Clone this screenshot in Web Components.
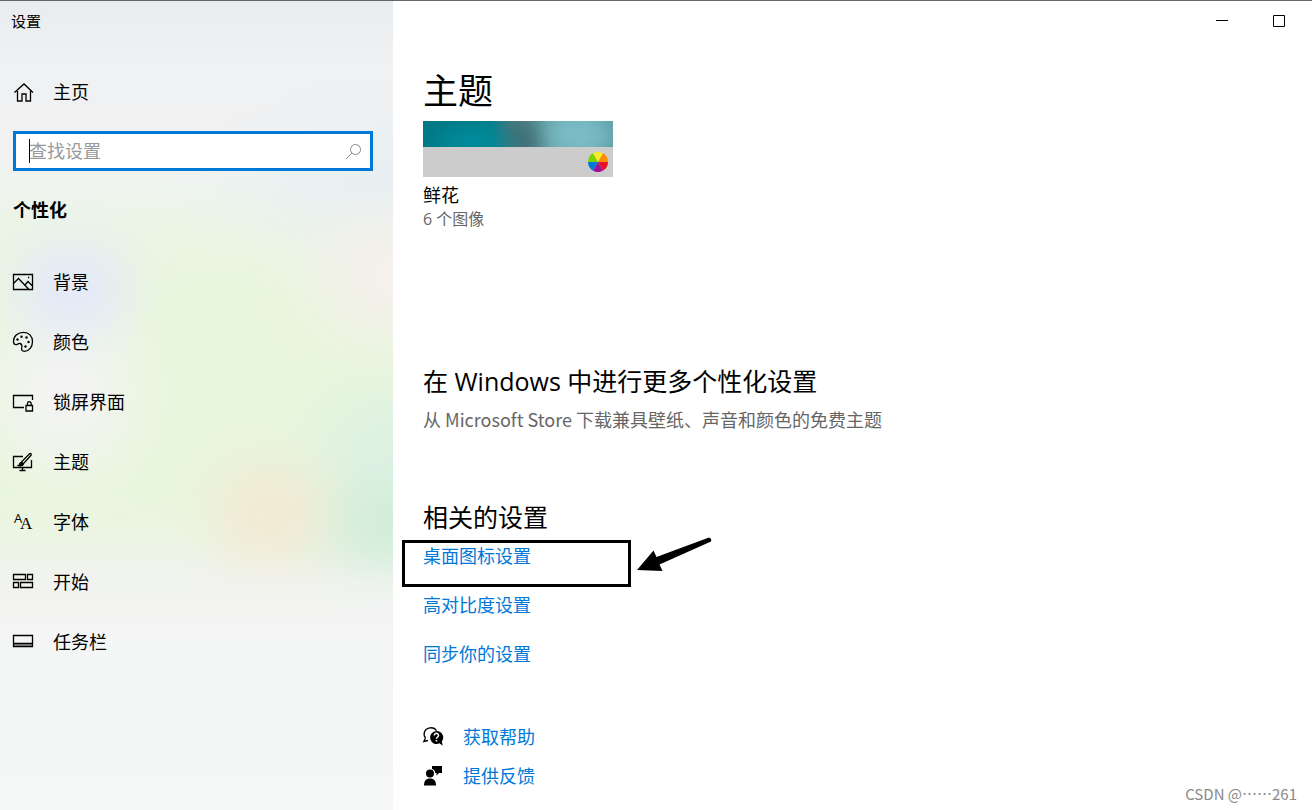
<!DOCTYPE html>
<html lang="zh-CN">
<head>
<meta charset="utf-8">
<meta name="viewport" content="width=device-width, initial-scale=1">
<title>设置</title>
<style>
  body {
    margin: 0;
    color: #000;
    background: #fff;
    font-family: "Open Sans", "Noto Sans CJK SC", sans-serif;
    font-size: 18px;
    line-height: 24px;
  }
</style>
</head>
<body>
<settings-window>
  <settings-sidebar slot="sidebar" heading="个性化">
    <nav-item slot="home" icon="home">主页</nav-item>
    <nav-item icon="picture">背景</nav-item>
    <nav-item icon="palette">颜色</nav-item>
    <nav-item icon="lock">锁屏界面</nav-item>
    <nav-item icon="theme">主题</nav-item>
    <nav-item icon="font">字体</nav-item>
    <nav-item icon="start">开始</nav-item>
    <nav-item icon="taskbar">任务栏</nav-item>
  </settings-sidebar>

  <theme-tile name="鲜花">6 个图像</theme-tile>
  <settings-section class="more" heading="在 Windows 中进行更多个性化设置">
    从 Microsoft Store 下载兼具壁纸、声音和颜色的免费主题
  </settings-section>
  <settings-section class="related" heading="相关的设置">
    <related-link marked>桌面图标设置</related-link>
    <related-link>高对比度设置</related-link>
    <related-link>同步你的设置</related-link>
  </settings-section>
  <support-link icon="help">获取帮助</support-link>
  <support-link icon="feedback">提供反馈</support-link>
  <span slot="watermark">CSDN @……261</span>
</settings-window>

<script>
const html = String.raw;

const icons = {
  home: html`<path d="M1.500 10.500 11 2l9 8.500M4.500 9v10H9v-7h4v7h4.500V9"/>`,
  picture: html`<path d="M.5 2.500h19v15H.5zM.5 11.500 5.500 6.500l10 10.500M12 13l3-3.500 5 5"/><path d="M15 5.500h1.200"/>`,
  palette: html`
    <path d="M.5 9.500C.5 4 5 .3 10.500.3c5.300 0 9 3.700 9 9.200 0 5.500-3.500 9.800-8 9.800-2.500 0-3.200-1.300-2.800-3.200.5-2.300 0-4.200-1.800-4.600-2-.4-2.300 1.500-4.200 1.200C1 12.400.5 11 .5 9.500z"/>
    <g fill="currentColor" stroke="none"><circle cx="4.500" cy="7.500" r="1.200"/><circle cx="8.500" cy="4.800" r="1.200"/><circle cx="13.500" cy="5.500" r="1.200"/><circle cx="15.500" cy="10" r="1.200"/><circle cx="12.500" cy="14.500" r="1.200"/></g>`,
  lock: html`<path d="M11 15.500H.5V3.500h19V8M13 13.500h6.500v5.500H13zM14.500 13.500V11.500a1.800 1.800 0 0 1 3.600 0v2"/>`,
  theme: html`<path d="M10 4.500H.5v11h18V8M9.500 15.500v3M6.500 18.500h6"/><path d="M5.500 13.500c1.500-.7.700-2.500 2.800-3.200L16.500 1.800c1.200-.8 2.300.2 1.500 1.500l-7.500 8.200c-.5 1.900-2.800 2.500-5 2zM8.300 10.300l2.200 1.400"/><path d="M6.500 13.200c1.300-.5 1-2 2.200-2.400l1.300.9c-.5 1.200-1.900 1.700-3.500 1.500z" fill="currentColor"/>`,
  font: html`<g fill="currentColor" stroke="none"><text x="1" y="11" font-family="Open Sans" font-size="13">A</text><text x="7" y="17" font-family="Liberation Serif" font-size="17">A</text></g>`,
  start: html`<path d="M.5 2.500h12v5H.5zM14.500 2.500h5v5h-5zM.5 10.500h5v5h-5zM7.500 10.500h12v5h-12z"/>`,
  taskbar: html`<path d="M1 12h18v2H1z" fill="#999" stroke="none"/><path d="M.5 3.500h19v11H.5zM1 11.500h18"/>`,
  help: html`
    <path d="M2.500 11 .8 14.500 5 13.500M2.500 11C-.5 7 1.500 1.500 7 .8c3-.2 5.500 1 6.500 3"/>
    <path d="M13.500 4a6.500 6.500 0 1 0 3 12.300l3.300 2.400-1-4.200A6.500 6.500 0 0 0 13.500 4z" fill="currentColor" stroke="none"/>
    <path d="M11.300 8.500c0-3 4.400-2.700 4.200 0-.1 1.500-2 1.500-2 3.200M13.500 13v1.400" stroke="#fff" stroke-width="1.500"/>`,
  feedback: html`
    <g fill="currentColor" stroke="none"><circle cx="7" cy="7.500" r="4"/><path d="M1 19.500c0-4.500 2-7 6-7s6 2.500 6 7zM9 0h10v7h-3l-2.500 2.500V7h-1.300c0-2-1.200-3.500-3.200-4z"/></g>`
};

function svgIcon(name) {
  return html`<svg width="20" height="20" viewBox="0 0 20 20" fill="none" stroke="currentColor" stroke-width="1.300" overflow="visible" aria-hidden="true">${icons[name]}</svg>`;
}

// soft spot of colour that fades out without a visible rim
function glow(size, position, rgb) {
  const stops = [[1, 0], [.88, 20], [.6, 40], [.3, 60], [.08, 80], [0, 100]];
  const list = stops.map(([alpha, at]) => `rgba(${rgb}, ${alpha}) ${at}%`).join(', ');
  return `radial-gradient(${size} at ${position}, ${list})`;
}

class SettingsElement extends HTMLElement {
  constructor() {
    super();
    this.attachShadow({ mode: 'open' });
  }

  connectedCallback() {
    this.shadowRoot.innerHTML = this.templateHTML;
  }
}

class SettingsWindow extends SettingsElement {
  get templateHTML() {
    return html`
      <style>
        :host {
          display: grid;
          grid-template-columns: 393px minmax(0, 1fr);
          min-height: 100vh;
          box-sizing: border-box;
          border-top: 1px solid #666;
          position: relative;
        }
        main { padding-left: 30px; }
        .controls {
          display: flex;
          justify-content: flex-end;
          padding-right: 5px;
        }
        button {
          display: grid;
          place-items: center;
          width: 57px;
          height: 40px;
          padding: 0;
          border: 0;
          background: none;
          color: #000;
        }
        h1 {
          margin: 27px 0 7px;
          font-size: 35px;
          font-weight: 400;
          line-height: 46px;
        }
        ::slotted(.more) { margin-top: 133px; }
        ::slotted(.related) { margin-top: 69px; margin-bottom: 27px; }
        footer {
          position: absolute;
          right: 15px;
          bottom: 4px;
          color: #8a8a8a;
          font-family: "Noto Sans CJK SC", sans-serif;
          font-size: 15px;
        }
      </style>
      <slot name="sidebar"></slot>
      <main>
        <div class="controls">
          <button aria-label="最小化"><svg width="12" height="12"><path d="M0 5.500h12" stroke="#000"/></svg></button>
          <button aria-label="最大化"><svg width="12" height="12"><path d="M.5.5h11v11H.5z" fill="none" stroke="#000"/></svg></button>
        </div>
        <h1>主题</h1>
        <slot></slot>
      </main>
      <footer><slot name="watermark"></slot></footer>
    `;
  }
}

class SettingsSidebar extends SettingsElement {
  get templateHTML() {
    return html`
      <style>
        :host {
          display: block;
          padding: 0 20px 0 13px;
          background:
            ${glow('110px 95px', '72px 288px', '228, 234, 248')},
            ${glow('130px 150px', '65px 390px', '244, 244, 244')},
            ${glow('150px 125px', '100% 275px', '245, 240, 236')},
            ${glow('110px 100px', '268px 512px', '242, 234, 212')},
            ${glow('140px 80px', '100% 522px', '211, 237, 219')},
            ${glow('150px 150px', '100% 470px', '220, 241, 226')},
            ${glow('240px 110px', '100% 185px', '230, 239, 242')},
            linear-gradient(#e9ecef 0, #eff1f2 60px, #f1f1f2 130px, #eff4f0 180px, #ebf5e4 230px, #e8f6dc 300px, #e8f6dc 490px, #ebf5e2 530px, #f1f3ef 580px, #f4f5f5 640px, #f5f7f7 100%);
        }
        .title {
          margin-left: -2px;
          margin-bottom: 20px;
          font-size: 15px;
          line-height: 41px;
        }
        search-box { margin-top: 9px; }
        h2 {
          margin: 19px 0 22px;
          font-size: 18px;
          font-weight: 700;
          line-height: 40px;
        }
      </style>
      <div class="title">设置</div>
      <slot name="home"></slot>
      <search-box placeholder="查找设置"></search-box>
      <h2>${this.getAttribute('heading')}</h2>
      <nav><slot></slot></nav>
    `;
  }
}

class NavItem extends SettingsElement {
  get templateHTML() {
    return html`
      <style>
        :host { display: block; }
        a {
          display: flex;
          align-items: center;
          gap: 20px;
          height: 60px;
          color: inherit;
          text-decoration: none;
        }
      </style>
      <a href="#">${svgIcon(this.getAttribute('icon'))}<slot></slot></a>
    `;
  }
}

class SearchBox extends SettingsElement {
  get templateHTML() {
    return html`
      <style>
        :host {
          display: flex;
          align-items: center;
          position: relative;
          height: 40px;
          box-sizing: border-box;
          border: 3px solid #0078d7;
          background: #fff;
          padding: 0 8px 0 13px;
        }
        input {
          flex: 1;
          min-width: 0;
          padding: 0;
          border: 0;
          outline: 0;
          background: none;
          font: inherit;
        }
        input::placeholder { color: #999; opacity: 1; }
        .caret {
          position: absolute;
          left: 13px;
          width: 1px;
          height: 24px;
          background: #000;
        }
      </style>
      <input type="text" aria-label="${this.getAttribute('placeholder')}" placeholder="${this.getAttribute('placeholder')}">
      <span class="caret"></span>
      <svg width="17" height="17" viewBox="0 0 17 17" fill="none" stroke="#888" aria-hidden="true">
        <circle cx="10.500" cy="6.500" r="5"/><path d="M7 10 1 16"/>
      </svg>
    `;
  }
}

class ThemeTile extends SettingsElement {
  get templateHTML() {
    return html`
      <style>
        :host { display: block; }
        .preview { width: 190px; }
        .photo {
          height: 26px;
          background:
            ${glow('60px 30px', '50px 22px', '0, 139, 154')},
            ${glow('40px 50px', '97px 22px', '65, 112, 118')},
            ${glow('60px 30px', '155px 14px', '122, 188, 198')},
            linear-gradient(90deg, #007884, #007f8c 36%, #4b8288 50%, #6aa6ad 65%, #72b3bc 85%, #5a9ca5);
        }
        .accent {
          display: flex;
          justify-content: flex-end;
          align-items: center;
          height: 30px;
          padding-right: 5px;
          background: #ccc;
        }
        .name { margin-top: 6px; }
        .count { color: #666; font-size: 16px; }
      </style>
      <div class="preview">
        <div class="photo"></div>
        <div class="accent">
          <svg width="20" height="20" viewBox="-10 -10 20 20" aria-hidden="true">
            <path fill="#f7ec24" d="M0 0-5-8.660A10 10 0 0 1 5-8.660z"/>
            <path fill="#ff8c00" d="M0 0 5-8.660A10 10 0 0 1 10 0z"/>
            <path fill="#e81123" d="M0 0H10A10 10 0 0 1 5 8.660z"/>
            <path fill="#9b1096" d="M0 0 5 8.660A10 10 0 0 1-5 8.660z"/>
            <path fill="#0078d7" d="M0 0-5 8.660A10 10 0 0 1-10 0z"/>
            <path fill="#7fd000" d="M0 0H-10A10 10 0 0 1-5-8.660z"/>
          </svg>
        </div>
      </div>
      <div class="name">${this.getAttribute('name')}</div>
      <div class="count"><slot></slot></div>
    `;
  }
}

class SettingsSection extends SettingsElement {
  get templateHTML() {
    return html`
      <style>
        :host { display: block; }
        h2 {
          margin: 0 0 9px;
          font-size: 25px;
          font-weight: 400;
          line-height: 34px;
        }
        div {
          color: #666;
          font-family: "Noto Sans CJK SC", sans-serif;
        }
      </style>
      <h2>${this.getAttribute('heading')}</h2>
      <div><slot></slot></div>
    `;
  }
}

class RelatedLink extends SettingsElement {
  get templateHTML() {
    return html`
      <style>
        :host {
          display: block;
          position: relative;
          height: 49px;
        }
        a { color: #0078d7; text-decoration: none; }
        /* hand-drawn marker over the highlighted link */
        .marker {
          position: absolute;
          left: -21px;
          top: -6px;
          width: 310px;
          height: 50px;
          pointer-events: none;
        }
      </style>
      <a href="#"><slot></slot></a>
      ${this.hasAttribute('marked') ? html`
        <svg class="marker" viewBox="0 0 310 50" aria-hidden="true">
          <rect x="1.500" y="4.500" width="226" height="44" fill="none" stroke="#000" stroke-width="3"/>
          <path d="M235 33 251.500 13.500 254.500 20 307 .5q3 1 2 4L257.500 27.500 260.500 34z"/>
        </svg>` : ''}
    `;
  }
}

class SupportLink extends SettingsElement {
  get templateHTML() {
    return html`
      <style>
        :host { display: block; }
        a {
          display: flex;
          align-items: center;
          gap: 20px;
          height: 39px;
          color: #0078d7;
          text-decoration: none;
        }
        svg { color: #000; }
      </style>
      <a href="#">${svgIcon(this.getAttribute('icon'))}<slot></slot></a>
    `;
  }
}

customElements.define('settings-window', SettingsWindow);
customElements.define('settings-sidebar', SettingsSidebar);
customElements.define('nav-item', NavItem);
customElements.define('search-box', SearchBox);
customElements.define('theme-tile', ThemeTile);
customElements.define('settings-section', SettingsSection);
customElements.define('related-link', RelatedLink);
customElements.define('support-link', SupportLink);
</script>
</body>
</html>
